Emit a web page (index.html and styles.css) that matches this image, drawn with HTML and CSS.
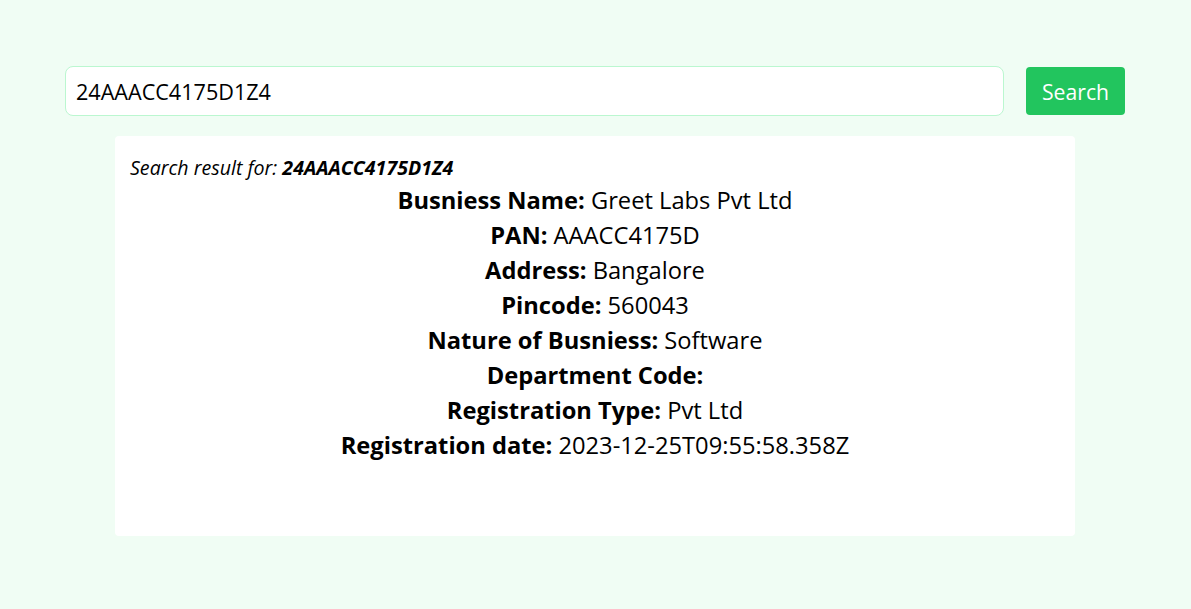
FILE: index.html
```html
<!DOCTYPE html>
<html>
<head>
<meta charset="utf-8">
<link rel="stylesheet" href="styles.css">
</head>
<body>
<div class="page">
  <form class="search-bar">
    <input class="search-input" type="text" value="24AAACC4175D1Z4">
    <button class="search-btn" type="button">Search</button>
  </form>
  <div class="result-card">
    <p class="result-for">Search result for: <b>24AAACC4175D1Z4</b></p>
    <div class="fields">
      <p class="field"><b>Busniess Name:</b> Greet Labs Pvt Ltd</p>
      <p class="field"><b>PAN:</b> AAACC4175D</p>
      <p class="field"><b>Address:</b> Bangalore</p>
      <p class="field"><b>Pincode:</b> 560043</p>
      <p class="field"><b>Nature of Busniess:</b> Software</p>
      <p class="field"><b>Department Code:</b> </p>
      <p class="field"><b>Registration Type:</b> Pvt Ltd</p>
      <p class="field"><b>Registration date:</b> 2023-12-25T09:55:58.358Z</p>
    </div>
  </div>
</div>
</body>
</html>
```
FILE: styles.css
```css
* { box-sizing: border-box; }
html, body {
  margin: 0;
  background: #f0fdf4;
  font-family: "Open Sans", "Noto Sans", sans-serif;
  color: #000;
}
.page {
  padding: 66px 66px 0 65px;
  display: flex;
  flex-direction: column;
  align-items: center;
}
.search-bar {
  width: 100%;
  display: flex;
  gap: 22px;
  margin: 0;
}
.search-input {
  flex: 1;
  height: 50px;
  border: 1px solid #bbf7d0;
  border-radius: 8px;
  background: #fff;
  padding: 0 10px;
  font-family: inherit;
  font-size: 21.6px;
  color: #000;
  outline: none;
}
.search-btn {
  width: 99px;
  height: 48px;
  margin-top: 1px;
  border: none;
  border-radius: 4px;
  background: #22c55e;
  color: #fff;
  font-family: inherit;
  font-size: 21.2px;
}
.result-card {
  width: 960px;
  height: 400px;
  margin-top: 20px;
  background: #fff;
  border-radius: 4px;
  padding: 20px 15px;
}
.result-for {
  margin: 0;
  font-style: italic;
  font-size: 19.6px;
  line-height: 24px;
}
.fields {
  text-align: center;
  margin-top: 3px;
}
.field {
  margin: 0;
  font-size: 23.7px;
  line-height: 35px;
}
```
